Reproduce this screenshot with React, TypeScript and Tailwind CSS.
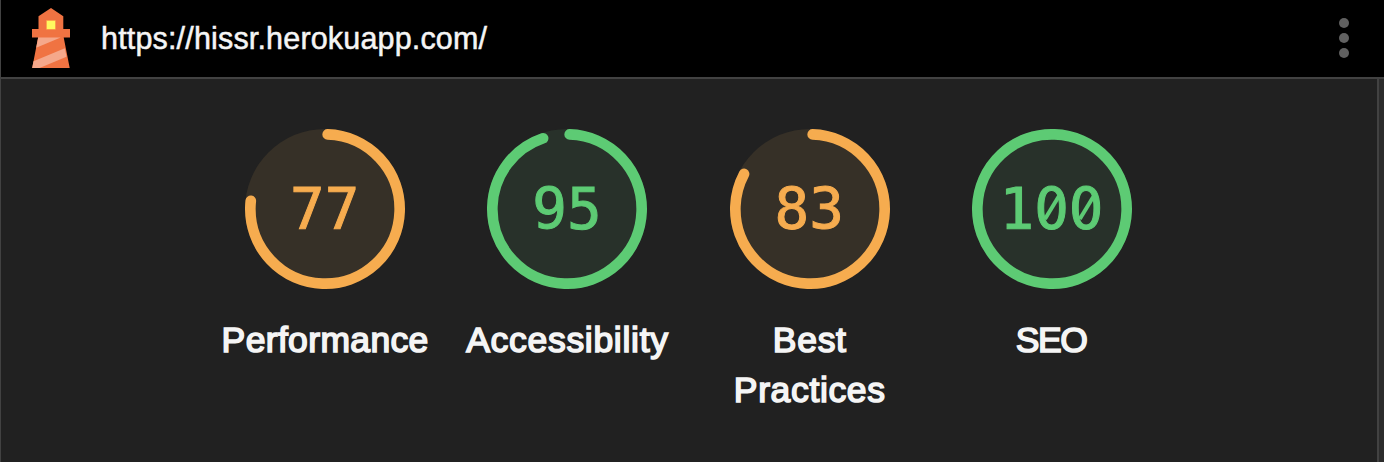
type Line = { text: string; spacing: string };
type GaugeData = { score: number; lines: Line[] };

const RADIUS = 56;
const START_ANGLE = 2.05;

const gauges: GaugeData[] = [
  { score: 77, lines: [{ text: 'Performance', spacing: 'tracking-[0.35px]' }] },
  { score: 95, lines: [{ text: 'Accessibility', spacing: 'tracking-[0.7px]' }] },
  {
    score: 83,
    lines: [
      { text: 'Best', spacing: 'tracking-[0.7px]' },
      { text: 'Practices', spacing: 'tracking-[0.65px]' },
    ],
  },
  { score: 100, lines: [{ text: 'SEO', spacing: 'tracking-[-1.5px] pr-0.5' }] },
];

function LighthouseLogo() {
  return (
    <svg className="h-[60px] w-[38px] shrink-0" viewBox="32 8 38 60">
      <path
        d="M51 8l12.3 8.2V29H70v8.5h-6.3L69.7 68H32.2l5.9-30.5H32V29h6.5V16.2z"
        fill="#f07342"
      />
      <path d="M38.2 37.5h22.5L36.2 47.8zM64.8 48.2l1.7 8.6L39.5 68h-7.3l1.3-6.8z" fill="#f5a88b" />
      <path d="M46.3 20.3h9.3v9.2h-9.3z" fill="#ffbd50" />
      <path d="M47 21h8v8h-8z" fill="#fff960" />
    </svg>
  );
}

function ZeroSlashes() {
  return (
    <svg className="z-10 col-start-1 row-start-1 size-40" viewBox="0 0 160 160">
      {[80, 114.8].map((x) => (
        <g key={x} transform={`translate(${x} 78.5)`}>
          <ellipse rx="6" ry="8" fill="#28312a" />
          <path d="M-7 11.5L7-11.5" stroke="currentColor" strokeWidth="4" />
        </g>
      ))}
    </svg>
  );
}

function Gauge({ score, lines }: GaugeData) {
  const passed = score >= 90;
  const circumference = 2 * Math.PI * RADIUS;
  const length = score === 100 ? circumference : circumference * (score / 100 - 3.3 / 360);
  return (
    <div className={passed ? 'flex w-[242.3px] flex-col items-center text-[#5dcb74]' : 'flex w-[242.3px] flex-col items-center text-[#f6ac4f]'}>
      <div className="grid size-40 place-items-center">
        <svg className="col-start-1 row-start-1 size-40" viewBox="0 0 120 120">
          <circle cx="60" cy="60" r="60" fill={passed ? '#28312a' : '#363027'} />
          <circle
            cx="60"
            cy="60"
            r={RADIUS}
            fill="none"
            stroke="currentColor"
            strokeWidth="8"
            strokeLinecap="round"
            strokeDasharray={`${length} ${circumference}`}
            transform={`rotate(${START_ANGLE - 90} 60 60)`}
          />
        </svg>
        <span className="col-start-1 row-start-1 pt-0.5 pr-px font-['DejaVu_Sans_Mono',monospace] text-[57.6px] leading-none [-webkit-text-stroke:1px_currentColor]">
          {score}
        </span>
        {score === 100 && <ZeroSlashes />}
      </div>
      <div className="mt-[26px] text-center text-[35.5px] leading-[50px] text-[#f5f5f5] [-webkit-text-stroke:1.6px_currentColor]">
        {lines.map(({ text, spacing }) => (
          <div key={text} className={spacing}>
            {text}
          </div>
        ))}
      </div>
    </div>
  );
}

export default function App() {
  return (
    <div className="flex h-[462px] w-[1384px] flex-col overflow-hidden border-l border-[#424242] bg-[#212121] font-['Liberation_Sans',Arial,sans-serif]">
      <header className="flex h-[79px] shrink-0 items-start border-b-2 border-[#424242] bg-black pl-[31px] pr-[35px]">
        <div className="pt-2">
          <LighthouseLogo />
        </div>
        <span className="ml-[31px] mt-[18px] text-[30.5px] leading-10 tracking-[0.17px] text-[#f5f5f5] [-webkit-text-stroke:0.5px_currentColor]">
          https://hissr.herokuapp.com/
        </span>
        <div className="ml-auto mt-[18px] flex flex-col gap-[5px]">
          <span className="size-2.5 rounded-full bg-[#616161]" />
          <span className="size-2.5 rounded-full bg-[#616161]" />
          <span className="size-2.5 rounded-full bg-[#616161]" />
        </div>
      </header>
      <div className="flex flex-1">
        <main className="flex flex-1 items-start pl-[203px] pt-[50px]">
          {gauges.map((gauge) => (
            <Gauge key={gauge.score} {...gauge} />
          ))}
        </main>
        <div className="w-[7px] border-l-2 border-[#424242] bg-[#2c2c2c]" />
      </div>
    </div>
  );
}
